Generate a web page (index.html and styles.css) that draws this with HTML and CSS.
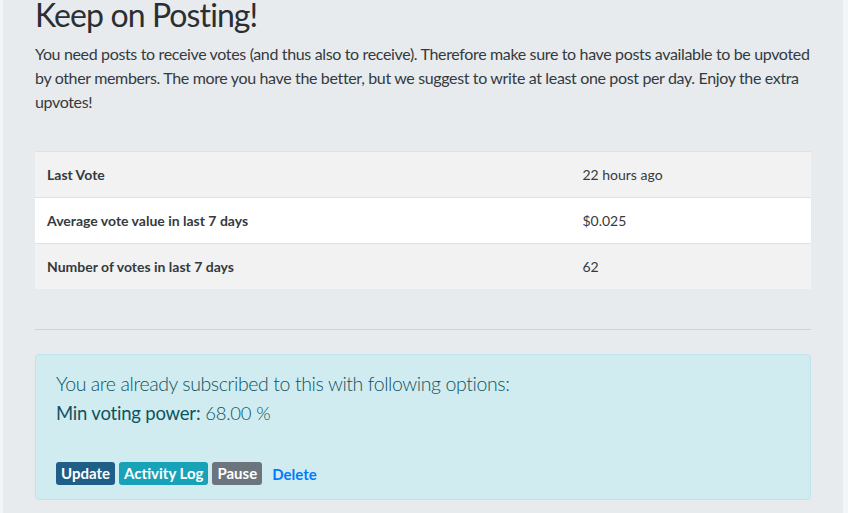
FILE: index.html
```html
<!DOCTYPE html>
<html lang="en">
<head>
    <meta charset="UTF-8">
    <meta name="viewport" content="width=device-width, initial-scale=1.0">
    <title>Keep on Posting</title>
    <link rel="stylesheet" href="styles.css">
</head>
<body>
    <div class="page">
        <h2 class="title">Keep on Posting!</h2>
        <p class="intro">You need posts to receive votes (and thus also to receive). Therefore make sure to have posts available to be upvoted by other members. The more you have the better, but we suggest to write at least one post per day. Enjoy the extra upvotes!</p>

        <table class="stats">
            <tbody>
                <tr>
                    <th>Last Vote</th>
                    <td>22 hours ago</td>
                </tr>
                <tr>
                    <th>Average vote value in last 7 days</th>
                    <td>$0.025</td>
                </tr>
                <tr>
                    <th>Number of votes in last 7 days</th>
                    <td>62</td>
                </tr>
            </tbody>
        </table>

        <hr class="divider">

        <div class="alert-info">
            <p class="lead">You are already subscribed to this with following options:</p>
            <p class="option"><strong>Min voting power:</strong> 68.00 %</p>
            <div class="actions">
                <a href="#" class="btn btn-update">Update</a>
                <a href="#" class="btn btn-log">Activity Log</a>
                <a href="#" class="btn btn-pause">Pause</a>
                <a href="#" class="btn-link">Delete</a>
            </div>
        </div>
    </div>
</body>
</html>
```

FILE: styles.css
```css
:root {
    --page-bg: #e8ebee;
    --edge-bg: #f4f5f7;
    --text: #343a40;
    --border: #dee2e6;
    --info-bg: #d1ecf1;
    --info-border: #bee5eb;
    --info-text: #0c5460;
}

* {
    margin: 0;
    padding: 0;
    box-sizing: border-box;
}

body {
    background: var(--edge-bg);
    font-family: 'Lato', 'Liberation Sans', sans-serif;
    color: var(--text);
    padding: 0 5px 0 3px;
}

.page {
    background: var(--page-bg);
    min-height: 513px;
    padding: 0 32px;
}

.title {
    font-size: 32px;
    line-height: 30px;
    font-weight: 400;
    letter-spacing: -0.9px;
    color: #2b2f33;
}

.intro {
    font-size: 16px;
    line-height: 24px;
    letter-spacing: -0.35px;
    margin: 12px 0 37px;
}

.stats {
    width: 100%;
    border-collapse: collapse;
    font-size: 14px;
    line-height: 21px;
}

.stats th,
.stats td {
    padding: 12px;
    border-top: 1px solid var(--border);
    text-align: left;
    vertical-align: top;
}

.stats th {
    width: 69%;
    font-weight: 700;
}

.stats tr:nth-child(odd) {
    background: #f2f2f2;
}

.stats tr:nth-child(even) {
    background: #fff;
}

.divider {
    border: 0;
    border-top: 1px solid #cfd3d7;
    margin: 40px 0 24px;
}

.alert-info {
    background: var(--info-bg);
    border: 1px solid var(--info-border);
    border-radius: 4px;
    color: var(--info-text);
    padding: 14px 20px 16px;
    height: 146px;
}

.lead {
    font-size: 19.5px;
    font-weight: 300;
    letter-spacing: -0.4px;
    line-height: 30px;
}

.option {
    font-size: 18.5px;
    font-weight: 300;
    letter-spacing: -0.2px;
    line-height: 28px;
}

.option strong {
    font-weight: 400;
}

.actions {
    display: flex;
    align-items: center;
    gap: 4px;
    margin-top: 35px;
}

.btn {
    display: inline-block;
    font-size: 15px;
    font-weight: 700;
    line-height: 23px;
    padding: 0 5px;
    border-radius: 3px;
    color: #fff;
    text-decoration: none;
}

.btn-update {
    background: #1f5f87;
}

.btn-log {
    background: #17a2b8;
}

.btn-pause {
    background: #6c757d;
}

.btn-link {
    font-size: 15px;
    font-weight: 700;
    color: #007bff;
    text-decoration: none;
    margin-left: 6px;
}
```
